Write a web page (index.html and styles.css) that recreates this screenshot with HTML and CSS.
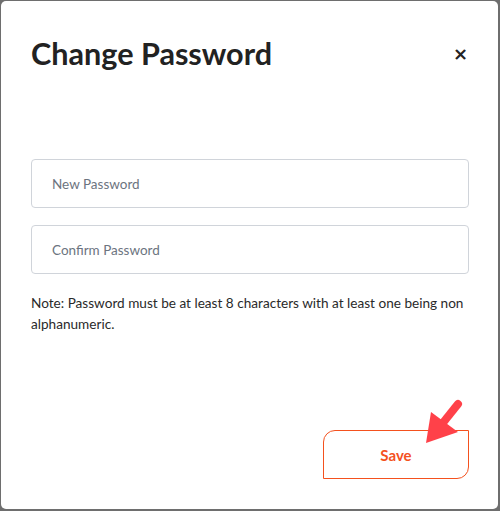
FILE: index.html
```html
<!DOCTYPE html>
<html lang="en">
<head>
<meta charset="utf-8">
<title>Change Password</title>
<link rel="stylesheet" href="styles.css">
</head>
<body>
<div class="modal">
  <div class="modal-header">
    <h1 class="modal-title">Change Password</h1>
    <button class="close" type="button" aria-label="Close">&times;</button>
  </div>
  <form class="form">
    <input class="field" type="password" placeholder="New Password">
    <input class="field" type="password" placeholder="Confirm Password">
    <p class="note">Note: Password must be at least 8 characters with at least one being non alphanumeric.</p>
  </form>
  <div class="footer">
    <button class="save" type="button">Save</button>
    <svg class="pointer" width="60" height="55" viewBox="0 0 60 55" aria-hidden="true">
      <line x1="53" y1="9" x2="37" y2="29" stroke="#ff4149" stroke-width="8" stroke-linecap="round"/>
      <polygon points="26,17 21,48 53,37" fill="#ff4149"/>
    </svg>
  </div>
</div>
</body>
</html>
```
FILE: styles.css
```css
html, body {
  margin: 0;
  padding: 0;
}
body {
  background: #6e6e6e;
  font-family: Lato, "Liberation Sans", sans-serif;
}
.modal {
  margin: 1px 2px 2px 1px;
  height: 508px;
  box-sizing: border-box;
  padding: 0 29px 0 30px;
  background: #fff;
  border-radius: 5px;
  display: flex;
  flex-direction: column;
}
.modal-header {
  display: flex;
  align-items: center;
  justify-content: space-between;
  padding-top: 33px;
}
.modal-title {
  margin: 0;
  font-size: 30.6px;
  line-height: 40px;
  font-weight: 700;
  color: #222;
}
.close {
  border: 0;
  background: none;
  padding: 0;
  margin-right: 1px;
  font-family: "DejaVu Sans", sans-serif;
  font-size: 18px;
  font-weight: 700;
  color: #222;
  line-height: 20px;
}
.form {
  margin-top: 85px;
  display: flex;
  flex-direction: column;
  gap: 17px;
}
.field {
  box-sizing: border-box;
  width: 100%;
  height: 49px;
  margin: 0;
  padding: 0 20px;
  border: 1px solid #d0d4da;
  border-radius: 4px;
  font-family: inherit;
  font-size: 13.5px;
  color: #333;
  outline: none;
}
.field::placeholder {
  color: #6c7480;
}
.note {
  margin: 2px 0 0;
  font-size: 13.6px;
  line-height: 21px;
  color: #2a2a2a;
}
.footer {
  margin-top: auto;
  margin-bottom: 30px;
  display: flex;
  justify-content: flex-end;
  position: relative;
}
.save {
  width: 146px;
  height: 49px;
  box-sizing: border-box;
  border: 1px solid #f4511e;
  border-radius: 12px 0 12px 0;
  background: #fff;
  color: #f4511e;
  font-family: inherit;
  font-size: 15px;
  font-weight: 700;
  padding: 0;
}
.pointer {
  position: absolute;
  right: 4px;
  top: -35px;
}
```
